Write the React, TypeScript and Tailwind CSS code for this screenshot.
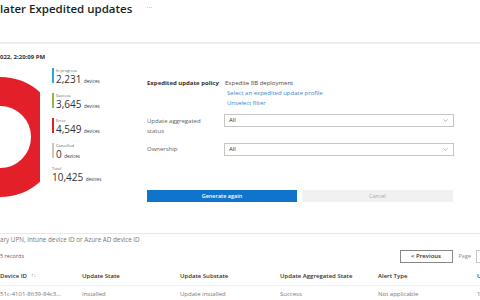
import { ChevronDown } from "lucide-react";

const legend = [
  { label: "In progress", value: "2,231", color: "bg-[#29a8e0]" },
  { label: "Success", value: "3,645", color: "bg-[#8cbd3f]" },
  { label: "Error", value: "4,549", color: "bg-[#e3202a]" },
  { label: "Cancelled", value: "0", color: "bg-[#c8c8c8]" },
];

const columns = [
  { title: "Device ID", w: "w-[82px]", sort: true },
  { title: "Update State", w: "w-[98px]" },
  { title: "Update Substate", w: "w-[100px]" },
  { title: "Update Aggregated State", w: "w-[98px]" },
  { title: "Alert Type", w: "w-[99px]" },
  { title: "U", w: "w-[20px]" },
];

const row = ["51c-4101-8639-84c3...", "Installed", "Update installed", "Success", "Not applicable", "1"];

const Donut = () => (
  // only the right part of the ring is inside the window
  <svg width="40" height="124" viewBox="-27 -62 40 124" className="shrink-0">
    <circle cx="-27" cy="0" r="45.5" fill="none" stroke="#e3202a" strokeWidth="29" />
  </svg>
);

const Select = ({ value }: { value: string }) => (
  <div className="flex items-center justify-between w-[230px] h-[13px] border border-[#c8c6c4] px-[4px] text-[6px] text-[#323130]">
    <span>{value}</span>
    <ChevronDown className="w-[7px] h-[7px] text-[#605e5c]" strokeWidth={1.5} />
  </div>
);

export default function App() {
  return (
    <div className="w-[480px] h-[300px] overflow-hidden bg-white font-['Open_Sans',sans-serif] text-[#323130]">
      {/* header */}
      <div className="h-[44px] border-b-2 border-[#ededed] flex items-start gap-[14px]">
        <h1 className="text-[11.5px] leading-[17px] font-semibold text-[#201f1e]">later Expedited updates</h1>
        <span className="text-[8px] leading-[14px] text-[#a19f9d]">···</span>
      </div>

      <div className="pt-[8px] text-[6px] font-bold leading-[10px]">022, 2:20:09 PM</div>

      <div className="flex h-[141px]">
        {/* chart + legend */}
        <div className="w-[147px] flex items-start">
          <div className="mt-[13px]">
            <Donut />
          </div>
          <div className="ml-[12px] mt-[6px] flex flex-col gap-[7px]">
            {legend.map((l) => (
              <div key={l.label} className="flex gap-[2px]">
                <div className={`w-[2px] h-[15px] ${l.color}`} />
                <div className="flex flex-col">
                  <span className="text-[4px] leading-[6px] text-[#605e5c]">{l.label}</span>
                  <span className="text-[10px] leading-[10px] text-[#323130]">
                    {l.value} <span className="text-[4.5px]">devices</span>
                  </span>
                </div>
              </div>
            ))}
            <div className="flex flex-col mt-[-2px]">
              <span className="text-[4px] leading-[6px] text-[#605e5c]">Total</span>
              <span className="text-[10px] leading-[10px]">
                10,425 <span className="text-[4.5px]">devices</span>
              </span>
            </div>
          </div>
        </div>

        {/* filter form */}
        <div className="flex flex-col pt-[16px] text-[6px]">
          <div className="flex">
            <span className="w-[78px] font-bold leading-[10px]">Expedited update policy</span>
            <div className="flex flex-col leading-[10px]">
              <span className="text-[#484644]">Expedite 8B deployment</span>
              <span className="pl-[2px] text-[#3a86c8]">Select an expedited update profile</span>
              <span className="pl-[2px] text-[#3a86c8]">Unselect filter</span>
            </div>
          </div>
          <div className="flex mt-[6px]">
            <span className="w-[77px] leading-[10px] pt-[2px] text-[#605e5c]">
              Update aggregated
              <br />
              status
            </span>
            <Select value="All" />
          </div>
          <div className="flex mt-[7px] items-center">
            <span className="w-[77px] text-[#605e5c]">Ownership</span>
            <Select value="All" />
          </div>
          <div className="flex gap-[5px] mt-[34px]">
            <button className="w-[150px] h-[12px] bg-[#0f74cc] text-white text-[5.5px] font-semibold">Generate again</button>
            <button className="w-[151px] h-[12px] bg-[#f1f1f1] text-[#a8a6a4] text-[5.5px]">Cancel</button>
          </div>
        </div>
      </div>

      {/* search */}
      <div className="mt-[30px] h-[13px] border-t border-[#e8e8e8] flex items-center text-[6.3px] text-[#797775]">
        ary UPN, Intune device ID or Azure AD device ID
      </div>

      <div className="mt-[3px] flex items-center justify-between h-[14px]">
        <span className="text-[5.5px] text-[#605e5c]">5 records</span>
        <div className="flex items-center">
          <button className="w-[53px] h-[13px] border border-[#8a8886] text-[6px] font-semibold text-[#323130]">
            &lt; Previous
          </button>
          <span className="ml-[6px] text-[5.5px] text-[#8a8886]">Page</span>
          <div className="ml-[5px] w-[4px] h-[13px] border-l border-t border-b border-[#c8c6c4]" />
        </div>
      </div>

      {/* table */}
      <div className="mt-[4px] flex h-[18px] items-center text-[6px] font-semibold text-[#323130]">
        {columns.map((c) => (
          <div key={c.title} className={`${c.w} shrink-0 flex items-center gap-[4px]`}>
            {c.title}
            {c.sort && <span className="text-[5px] text-[#8a8886] font-normal">↑↓</span>}
          </div>
        ))}
      </div>
      <div className="flex h-[17px] items-center border-t border-[#f0f0f0] text-[6px] text-[#797775]">
        {row.map((v, i) => (
          <div key={i} className={`${columns[i].w} shrink-0`}>
            {v}
          </div>
        ))}
      </div>
    </div>
  );
}
